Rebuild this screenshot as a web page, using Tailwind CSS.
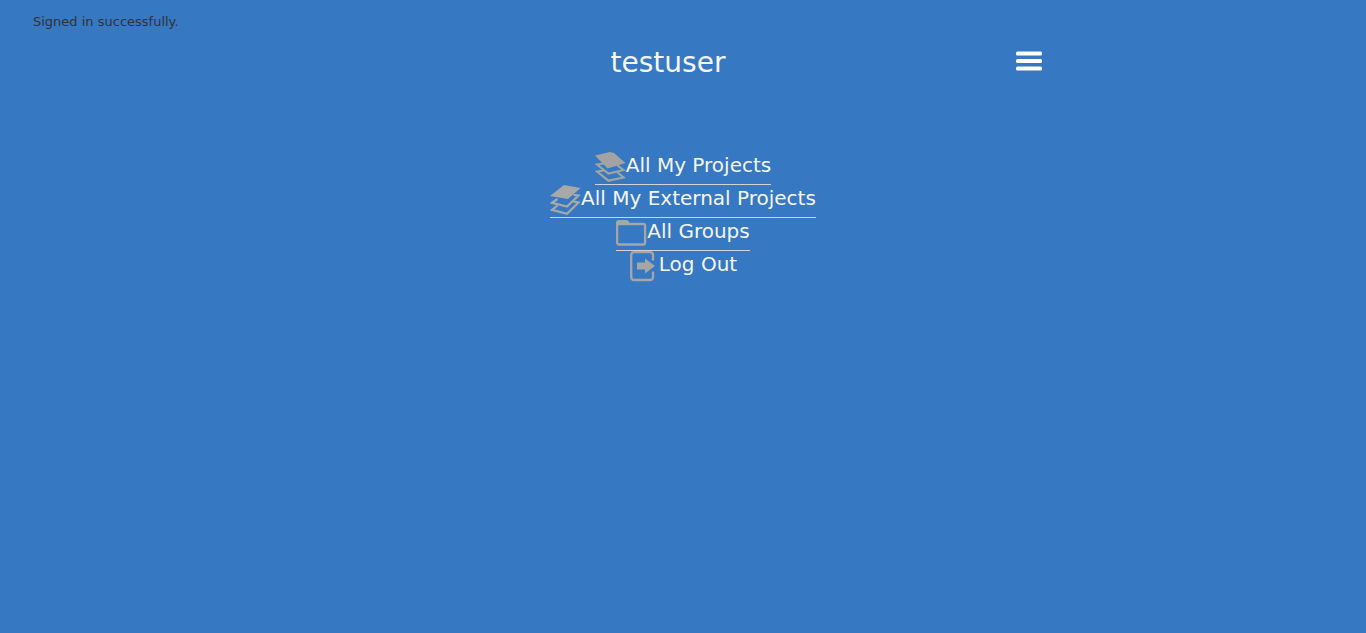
<!DOCTYPE html>
<html lang="en">
<head>
<meta charset="utf-8">
<meta name="viewport" content="width=device-width, initial-scale=1">
<title>testuser</title>
<script src="https://cdn.jsdelivr.net/npm/@tailwindcss/browser@4"></script>
</head>
<body class="min-h-screen bg-[#3678c2] font-['Verdana','DejaVu_Sans',sans-serif] text-[#f5f5f5]">
<p class="px-[33px] pt-3 text-[13px] leading-5 text-[#333333]" role="status">Signed in successfully.</p>
<header class="mx-auto grid max-w-[720px] grid-cols-[1fr_auto_1fr] items-start pt-3">
  <h1 class="col-start-2 mr-[30px] pt-px text-[28px] leading-9">testuser</h1>
  <button type="button" aria-label="Menu" class="justify-self-end pt-[7px]">
    <svg class="block h-5 w-7" viewBox="0 0 28 20" fill="#fff"><rect x="1" y="0.500" width="26" height="4" rx="1.500"/><rect x="1" y="8" width="26" height="4" rx="1.500"/><rect x="1" y="15.500" width="26" height="4" rx="1.500"/></svg>
  </button>
</header>
<nav class="mt-[71px] flex flex-col items-center text-[20px] leading-[26px]">
  <a href="#projects" class="flex h-[33px] border-b border-[#d3d3d3]">
    <svg class="size-[31px]" viewBox="0 0 31 31" fill="#a3a3a3"><path d="M0 3.500 15 0 19 1 30.500 11 12.500 16.500Z"/><g fill="none" stroke="#a3a3a3" stroke-width="2.200"><path d="M9 11.500 2 12.500 13.500 21.500 28.500 18 22 13"/><path d="M9 18.500 2 19.500 13.500 28.700 28.500 25.500 22 20"/></g></svg>
    <span>All My Projects</span>
  </a>
  <a href="#external" class="flex h-[33px] border-b border-[#d3d3d3]">
    <svg class="size-[31px]" viewBox="0 0 31 31" fill="#a8a8a8"><path d="M0 11 14 0 30.500 3 18 14Z"/><g fill="none" stroke="#a8a8a8" stroke-width="2.200"><path d="M7.500 14 2 17.800 17 21.500 28.500 10.500 23.500 9.800"/><path d="M7.500 20.500 2 24.800 17 28.800 28.500 17.500 23.500 16.700"/></g></svg>
    <span>All My External Projects</span>
  </a>
  <a href="#groups" class="flex h-[33px] border-b border-[#d3d3d3]">
    <svg class="h-[31px] w-[31px]" viewBox="0 0 31 31"><rect x="1.100" y="6" width="28" height="20.500" rx="2" fill="none" stroke="#a6a6a6" stroke-width="2.300"/><path d="M0 8V5Q0 2 3 2H10Q13 2 13.500 4.900H27V6H3L1 8Z" fill="#a6a6a6"/></svg>
    <span>All Groups</span>
  </a>
  <a href="#logout" class="flex h-[33px]">
    <svg class="h-[31px] w-[30px]" viewBox="0 0 30 31"><path d="M24 9.500V4Q24 1.200 21 1.200H5Q2.200 1.200 2.200 4V26Q2.200 29 5 29H21Q24 29 24 26V20.500" fill="none" stroke="#a6a6a6" stroke-width="2.300"/><path d="M8 11.500H16V7.500L26 15 16 22.500V18.500H8Z" fill="#a6a6a6"/></svg>
    <span>Log Out</span>
  </a>
</nav>
</body>
</html>
